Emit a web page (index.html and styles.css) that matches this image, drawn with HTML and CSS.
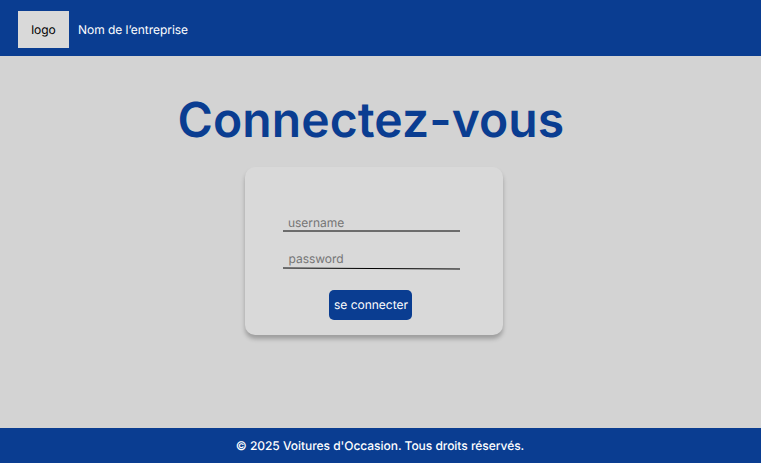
FILE: index.html
```html
<!DOCTYPE html>
<html lang="fr">
<head>
<meta charset="utf-8">
<title>Connectez-vous</title>
<link rel="stylesheet" href="styles.css">
</head>
<body>
<header class="topbar">
  <div class="logo">logo</div>
  <span class="company">Nom de l’entreprise</span>
</header>
<main class="content">
  <h1 class="title">Connectez-vous</h1>
  <form class="card">
    <label class="field username"><span>username</span>
      <svg class="rule" viewBox="0 0 177 4"><path d="M0 1H177"/></svg></label>
    <label class="field password"><span>password</span>
      <svg class="rule" viewBox="0 0 177 4"><path d="M0 2L177 3"/></svg></label>
    <button class="submit" type="button">se connecter</button>
  </form>
</main>
<footer class="footer">© 2025 Voitures d'Occasion. Tous droits réservés.</footer>
</body>
</html>
```
FILE: styles.css
```css
* { box-sizing: border-box; }
body {
  margin: 0;
  height: 463px;
  display: flex;
  flex-direction: column;
  background: #d3d3d3;
  font: 12px/15px Inter, sans-serif;
  letter-spacing: -.035px;
  text-rendering: geometricPrecision;
  overflow: hidden;
}
.topbar {
  flex: 0 0 56px;
  display: flex;
  padding: 11px 18px 8px;
  background: #0a3d91;
  color: #fff;
}
.logo {
  width: 51px;
  height: 37px;
  background: #d9d9d9;
  color: #000;
  line-height: 37px;
  text-align: center;
}
.company { margin-left: 9px; line-height: 37px; }
.content { flex: 1; }
.title {
  margin: 35px 0 0 177.5px;
  font-size: 48px;
  line-height: 58px;
  font-weight: 600;
  letter-spacing: .1px;
  color: #0a3d91;
  white-space: nowrap;
}
.card {
  width: 258px;
  height: 168px;
  margin: 18px 0 0 245px;
  padding: 48px 0 0 38px;
  border-radius: 10px;
  background: #d9d9d9;
  box-shadow: 0 4px 4px rgba(0, 0, 0, .25);
}
.field {
  display: block;
  width: 177px;
  height: 36px;
  color: #757575;
}
.field span { display: block; padding-left: 5px; height: 15px; }
.password span { padding-left: 5.5px; }
.rule { display: block; width: 177px; height: 4px; fill: none; stroke: #000; }
.submit {
  display: block;
  width: 83px;
  height: 30px;
  margin: 3px 0 0 46px;
  padding: 0 0 1px 1px;
  border: 0;
  border-radius: 5px;
  background: #0a3d91;
  color: #fff;
  font: inherit;
  text-rendering: inherit;
}
.footer {
  flex: 0 0 35px;
  padding-right: 1px;
  background: #0a3d91;
  color: #fff;
  font-weight: 500;
  line-height: 35px;
  text-align: center;
}
```
